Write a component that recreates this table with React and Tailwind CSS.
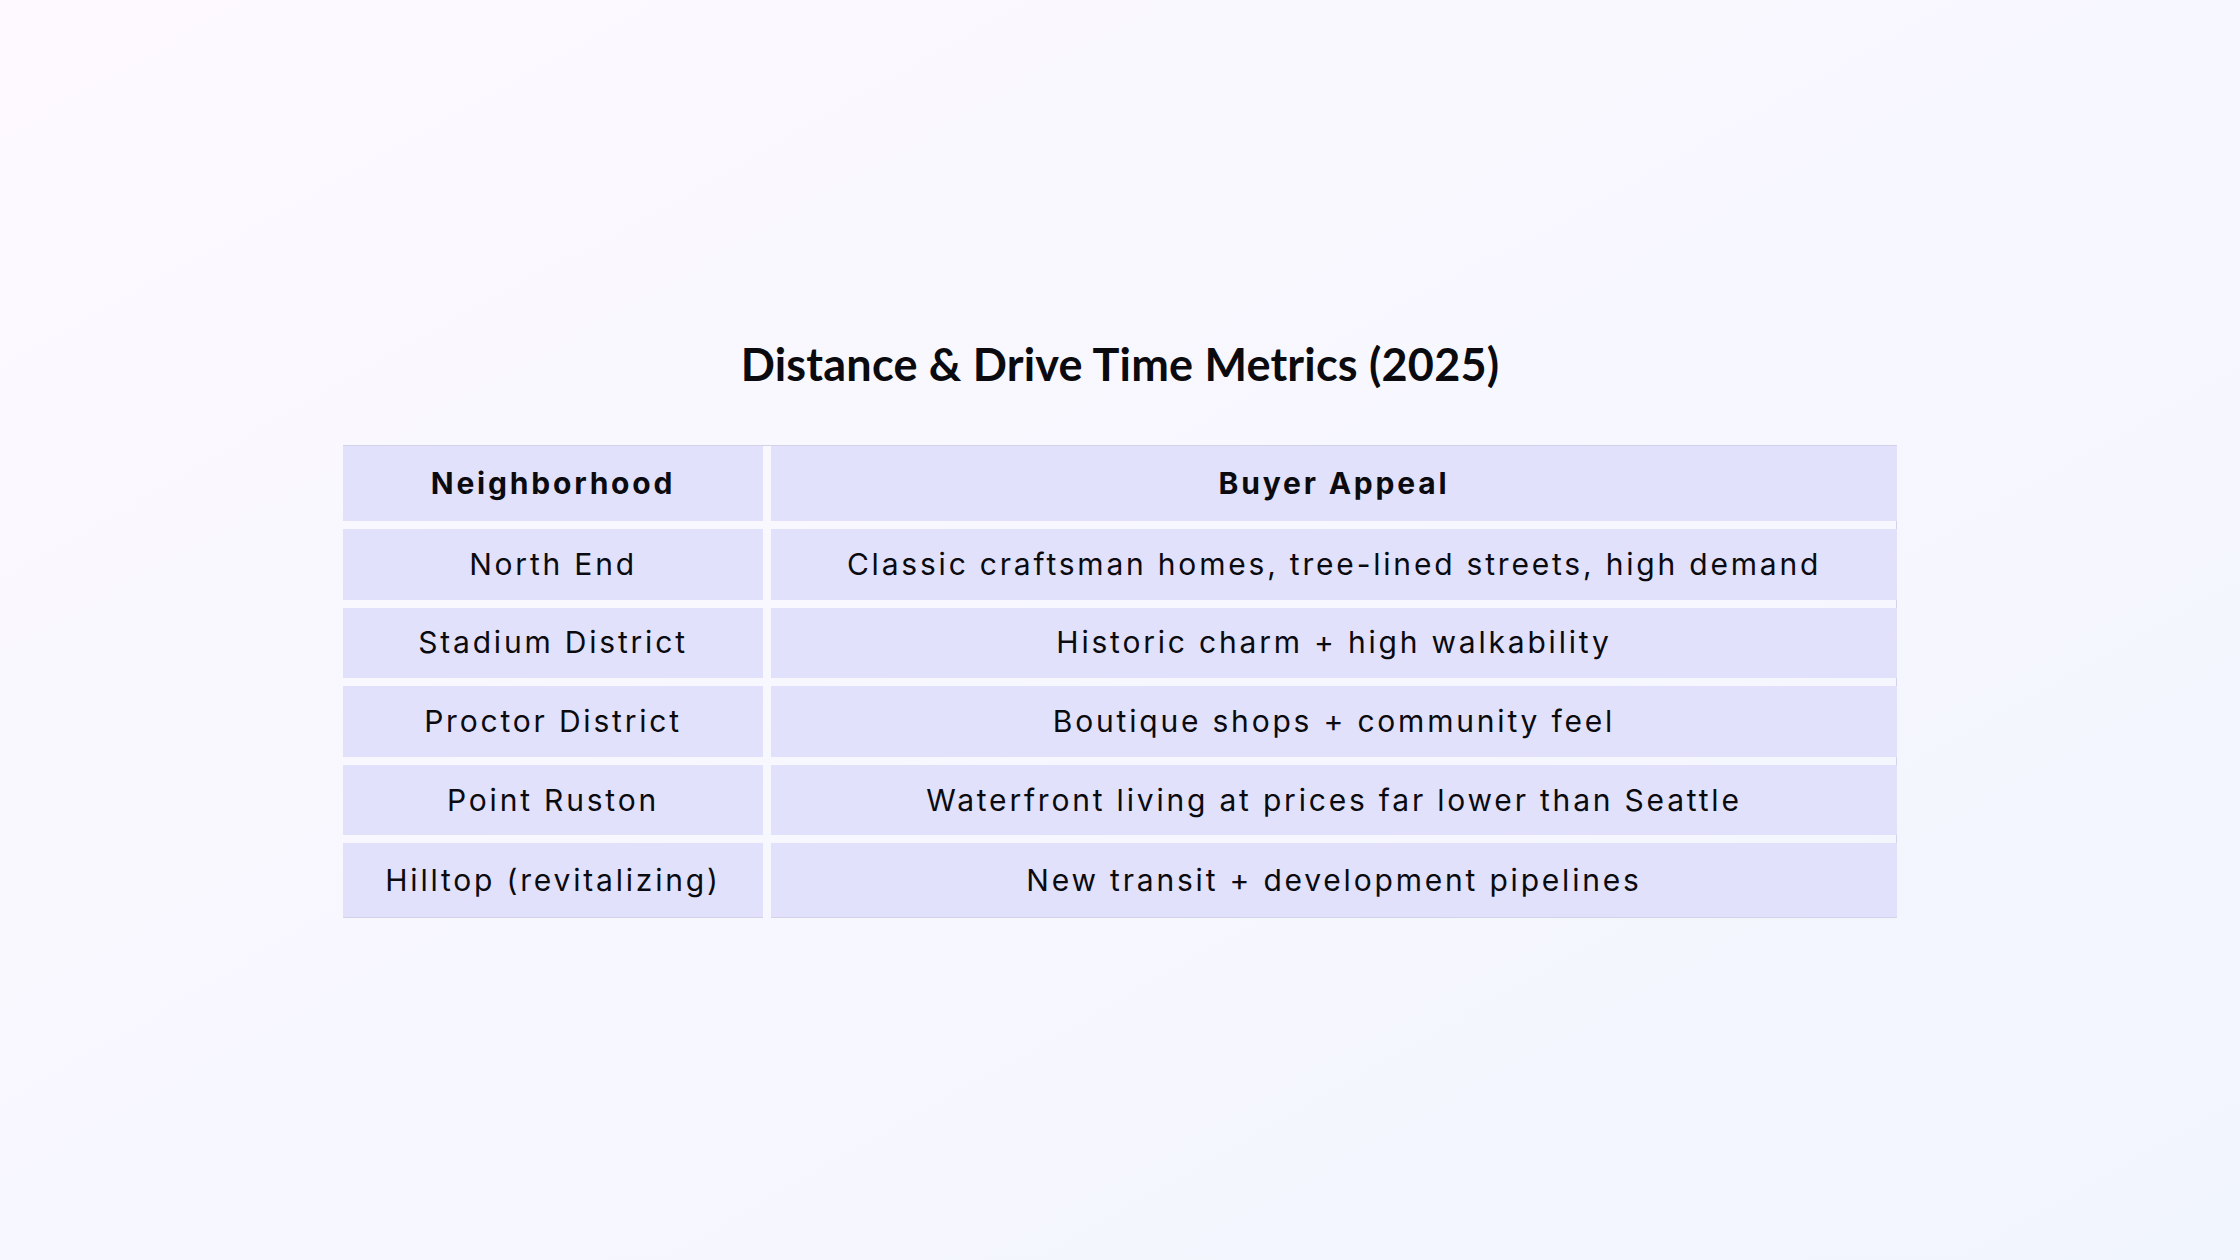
import React from "react";

const rows = [
  ["North End", "Classic craftsman homes, tree-lined streets, high demand"],
  ["Stadium District", "Historic charm + high walkability"],
  ["Proctor District", "Boutique shops + community feel"],
  ["Point Ruston", "Waterfront living at prices far lower than Seattle"],
  ["Hilltop (revitalizing)", "New transit + development pipelines"],
];

export default function App() {
  return (
    <div className="w-full h-[1260px] bg-gradient-to-br from-[#fdf9ff] to-[#f1f5fe] flex flex-col items-center pt-[338px] text-[#0b0b0f] font-['Inter','Liberation_Sans',sans-serif]">
      <h1 className="text-[45px] font-bold leading-[52px] tracking-[0.2px] font-['Lato','Liberation_Sans',sans-serif] mb-[55px]">
        Distance &amp; Drive Time Metrics (2025)
      </h1>
      <div className="w-[1554px] grid grid-cols-[420px_1126px] gap-2 border-t border-r border-[#d2d3ea] text-[30px] tracking-[2.8px]">
        <div className="h-[75px] bg-[#e1e1fc] flex items-center justify-center font-bold">
          Neighborhood
        </div>
        <div className="h-[75px] bg-[#e1e1fc] flex items-center justify-center font-bold">
          Buyer Appeal
        </div>
        {rows.map(([a, b], i) => (
          <React.Fragment key={a}>
            <div
              className={`${i === rows.length - 1 ? "h-[75px] border-b border-[#d2d3ea]" : "h-[70.6px]"} bg-[#e1e1fc] flex items-center justify-center`}
            >
              {a}
            </div>
            <div
              className={`${i === rows.length - 1 ? "h-[75px] border-b border-[#d2d3ea]" : "h-[70.6px]"} bg-[#e1e1fc] flex items-center justify-center`}
            >
              {b}
            </div>
          </React.Fragment>
        ))}
      </div>
    </div>
  );
}
